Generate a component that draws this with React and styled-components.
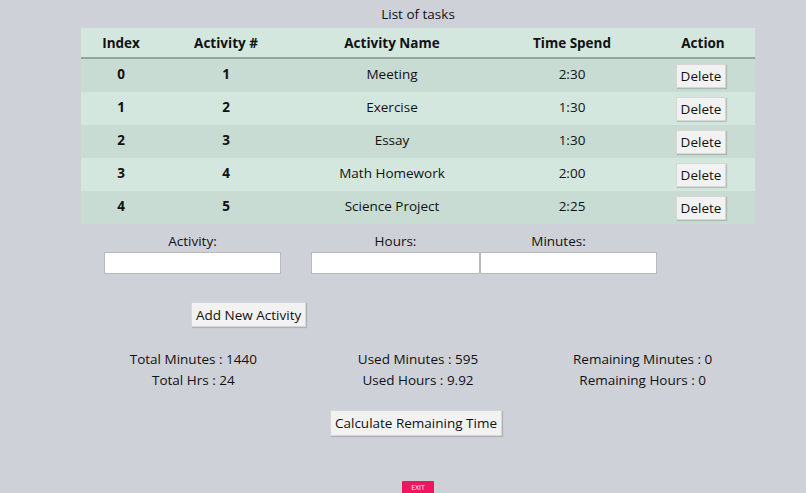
import React from "react";
import styled, { createGlobalStyle } from "styled-components";

const GlobalStyle = createGlobalStyle`
  html, body {
    margin: 0;
    padding: 0;
    background: #cfd1d9;
    font-family: "Open Sans", "Noto Sans", sans-serif;
    color: #111;
  }
`;

const tasks = [
  { id: 1, name: "Meeting", time: "2:30" },
  { id: 2, name: "Exercise", time: "1:30" },
  { id: 3, name: "Essay", time: "1:30" },
  { id: 4, name: "Math Homework", time: "2:00" },
  { id: 5, name: "Science Project", time: "2:25" },
];

const columns = "80px 130px 202px 158px 104px";

const Page = styled.div`
  width: 674px;
  margin-left: 81px;
  height: 493px;
  overflow: hidden;
  display: flex;
  flex-direction: column;
`;

const Title = styled.div`
  height: 29px;
  line-height: 28px;
  font-size: 13.5px;
  text-align: center;
`;

const Table = styled.div`
  display: flex;
  flex-direction: column;
`;

const HeadRow = styled.div`
  display: grid;
  grid-template-columns: ${columns};
  height: 29px;
  align-items: center;
  background: #d3e7df;
  border-bottom: 2px solid #93a49b;
  font-weight: 700;
  font-size: 13.5px;
  text-align: center;
`;

const Row = styled.div`
  box-sizing: border-box;
  display: grid;
  grid-template-columns: ${columns};
  height: 33px;
  padding-bottom: 3px;
  align-items: center;
  text-align: center;
  font-size: 13.5px;
  background: ${(p) => (p.$dark ? "#c8dcd3" : "#d3e7df")};
`;

const Bold = styled.div`
  font-weight: 700;
`;

const Btn = styled.button`
  font-family: "Open Sans", "Noto Sans", sans-serif;
  font-size: 13.5px;
  color: #111;
  background: #f2f2f2;
  border: 1px solid #d6d6d6;
  box-shadow: 1px 1px 1px rgba(0, 0, 0, 0.15);
  padding: 0 4px;
  height: ${(p) => p.$h || 24}px;
  cursor: pointer;
`;

const DeleteCell = styled.div`
  display: flex;
  justify-content: center;
  padding-top: 4px;
  padding-right: 4px;
`;

const Form = styled.div`
  display: flex;
  margin-top: 7px;
  margin-left: 23px;
`;

const Field = styled.label`
  display: flex;
  flex-direction: column;
  align-items: center;
  width: ${(p) => p.$w}px;
  margin-right: ${(p) => p.$gap || 0}px;
  font-size: 13.5px;
  line-height: 20px;
`;

const LabelText = styled.span`
  margin-right: ${(p) => p.$shift || 0}px;
`;

const Input = styled.input`
  box-sizing: border-box;
  width: 100%;
  height: 22px;
  margin-top: 1px;
  border: 1px solid #b9b9b9;
  background: #fff;
  padding: 0 4px;
`;

const AddWrap = styled.div`
  margin-top: 28px;
  margin-left: 110px;
`;

const Stats = styled.div`
  display: grid;
  grid-template-columns: 1fr 1fr 1fr;
  margin-top: 22px;
  font-size: 13.5px;
  line-height: 21px;
`;

const StatCol = styled.div`
  display: flex;
  flex-direction: column;
  align-items: center;
  white-space: nowrap;
`;

const CalcWrap = styled.div`
  display: flex;
  justify-content: center;
  margin-top: 19px;
  margin-left: -4px;
`;

const ExitWrap = styled.div`
  display: flex;
  justify-content: center;
  margin-top: 45px;
`;

const Exit = styled.button`
  background: #ee1660;
  color: #fff;
  border: none;
  font-family: "Open Sans", sans-serif;
  font-size: 7px;
  width: 32px;
  height: 16px;
  padding: 0 0 3px;
  border-radius: 1px;
`;

export default function App() {
  return (
    <>
      <GlobalStyle />
      <Page>
        <Title>List of tasks</Title>
        <Table>
          <HeadRow>
            <div>Index</div>
            <div>Activity #</div>
            <div>Activity Name</div>
            <div>Time Spend</div>
            <div>Action</div>
          </HeadRow>
          {tasks.map((t, i) => (
            <Row key={t.id} $dark={i % 2 === 0}>
              <Bold>{i}</Bold>
              <Bold>{t.id}</Bold>
              <div>{t.name}</div>
              <div>{t.time}</div>
              <DeleteCell>
                <Btn>Delete</Btn>
              </DeleteCell>
            </Row>
          ))}
        </Table>

        <Form>
          <Field $w={177} $gap={30}>
            <LabelText>Activity:</LabelText>
            <Input />
          </Field>
          <Field $w={169}>
            <LabelText>Hours:</LabelText>
            <Input />
          </Field>
          <Field $w={177}>
            <LabelText $shift={20}>Minutes:</LabelText>
            <Input />
          </Field>
        </Form>

        <AddWrap>
          <Btn $h={25}>Add New Activity</Btn>
        </AddWrap>

        <Stats>
          <StatCol>
            <span>Total Minutes : 1440</span>
            <span>Total Hrs : 24</span>
          </StatCol>
          <StatCol>
            <span>Used Minutes : 595</span>
            <span>Used Hours : 9.92</span>
          </StatCol>
          <StatCol>
            <span>Remaining Minutes : 0</span>
            <span>Remaining Hours : 0</span>
          </StatCol>
        </Stats>

        <CalcWrap>
          <Btn $h={26}>Calculate Remaining Time</Btn>
        </CalcWrap>

        <ExitWrap>
          <Exit>EXIT</Exit>
        </ExitWrap>
      </Page>
    </>
  );
}
